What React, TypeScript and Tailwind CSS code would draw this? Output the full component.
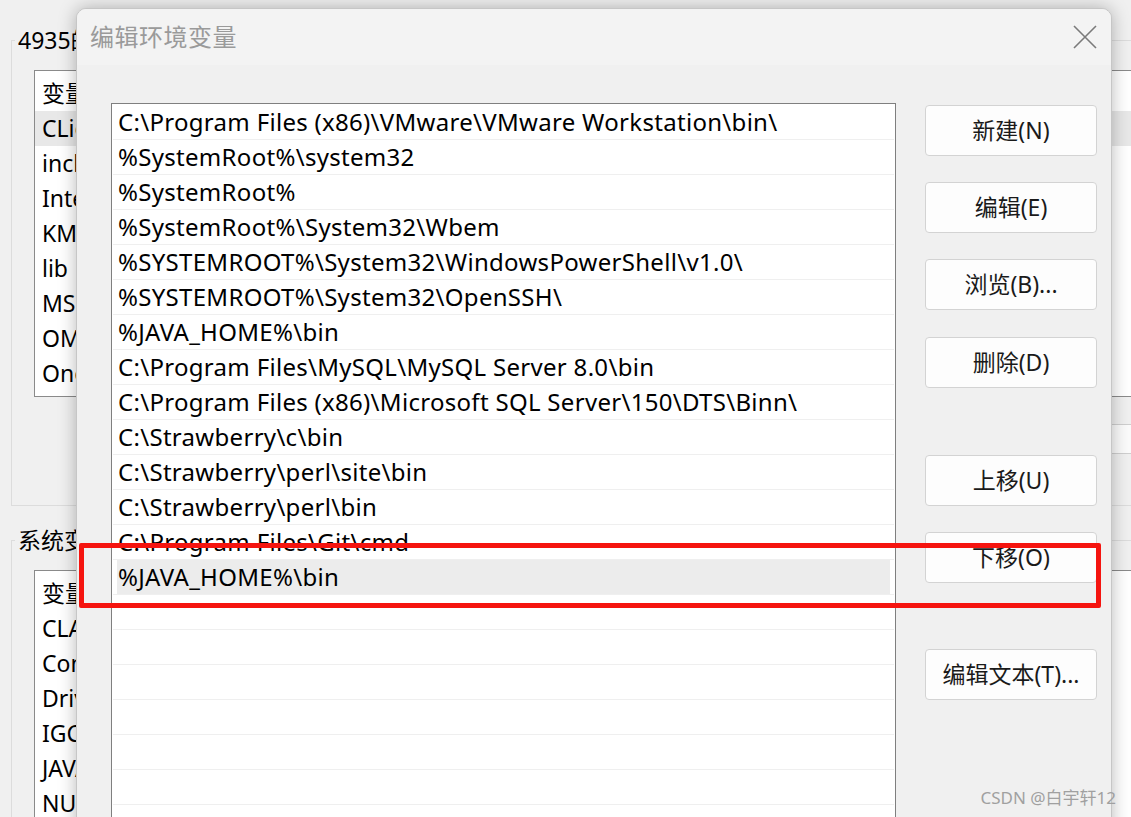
import React from "react";

const FONT = { fontFamily: '"Noto Sans", "Noto Sans CJK SC", sans-serif' };

const paths = [
  "C:\\Program Files (x86)\\VMware\\VMware Workstation\\bin\\",
  "%SystemRoot%\\system32",
  "%SystemRoot%",
  "%SystemRoot%\\System32\\Wbem",
  "%SYSTEMROOT%\\System32\\WindowsPowerShell\\v1.0\\",
  "%SYSTEMROOT%\\System32\\OpenSSH\\",
  "%JAVA_HOME%\\bin",
  "C:\\Program Files\\MySQL\\MySQL Server 8.0\\bin",
  "C:\\Program Files (x86)\\Microsoft SQL Server\\150\\DTS\\Binn\\",
  "C:\\Strawberry\\c\\bin",
  "C:\\Strawberry\\perl\\site\\bin",
  "C:\\Strawberry\\perl\\bin",
  "C:\\Program Files\\Git\\cmd",
  "%JAVA_HOME%\\bin",
];

const rows = [...paths, ...Array(8).fill("")];

function BgList({ items, hl }: { items: string[]; hl?: number }) {
  return (
    <div className="ml-[22px] w-[1200px] border border-[#8a8a8a] bg-white py-[5px]">
      {items.map((t, i) => (
        <div
          key={i}
          className={`h-[35px] pl-[7px] flex items-center text-[23px] text-black ${i === hl ? "bg-[#e8e8e8]" : ""}`}
        >
          {t}
        </div>
      ))}
    </div>
  );
}

function Btn({ label, mt }: { label: string; mt: string }) {
  return (
    <div
      className={`${mt} w-[172px] h-[51px] rounded-[4px] border border-[#d3d3d3] bg-[#fdfdfd] flex items-center justify-center text-[23px] text-[#1a1a1a]`}
    >
      {label}
    </div>
  );
}

export default function App() {
  return (
    <div className="relative w-[1131px] h-[817px] overflow-hidden bg-[#f0f0f0]" style={FONT}>
      {/* background window */}
      <div className="pl-[11px] pt-[26px]">
        <fieldset className="border border-[#dcdcdc] h-[480px] pt-[16px]">
          <legend className="ml-[3px] px-[3px] text-[23px] text-black leading-[28px]">4935的用户变量(U)</legend>
          <BgList items={["变量", "CLion", "include", "IntelliJ", "KMP", "lib", "MSMPI", "OMP", "OneDrive"]} hl={1} />
          <div className="mt-[27px] ml-[900px] w-[300px] h-[30px] border border-[#cfcfcf] bg-[#fbfbfb]" />
        </fieldset>
        <fieldset className="mt-[20px] border border-[#dcdcdc] h-[400px] pt-[16px]">
          <legend className="ml-[3px] px-[3px] text-[23px] text-black leading-[28px]">系统变量(S)</legend>
          <BgList items={["变量", "CLASSPATH", "ComSpec", "DriverData", "IGCCSVC_DB", "JAVA_HOME", "NUMBER"]} />
        </fieldset>
      </div>

      {/* dialog window */}
      <div className="absolute left-[76px] top-[8px] w-[1036px] h-[840px] rounded-t-[10px] border border-[#c6c6c6] bg-[#f0f0f0] shadow-[0_0_18px_rgba(0,0,0,0.28)] overflow-hidden">
        <div className="h-[56px] bg-[#f3f3f3] flex items-center justify-between pl-[13px] pr-[8px]">
          <span className="text-[24px] text-[#9a9a9a] tracking-[0.5px]">编辑环境变量</span>
          <svg width="36" height="36" viewBox="0 0 36 36">
            <path d="M7 7 L29 29 M29 7 L7 29" stroke="#7a7a7a" strokeWidth="1.6" fill="none" />
          </svg>
        </div>
        <div className="flex pl-[34px] pt-[38px]">
          <div className="w-[785px] border border-[#7f7f7f] bg-white pt-[1px] px-[1px]">
            {rows.map((t, i) => (
              <div key={i} className="border-b border-[#efefef]">
                <div
                  className={`h-[34px] mx-[4px] pl-[1px] flex items-center text-[24px] tracking-[0.3px] text-black whitespace-nowrap ${i === 13 ? "bg-[#ececec]" : ""}`}
                >
                  {t}
                </div>
              </div>
            ))}
          </div>
          <div className="ml-[29px] flex flex-col">
            <Btn label="新建(N)" mt="mt-[2px]" />
            <Btn label="编辑(E)" mt="mt-[26px]" />
            <Btn label="浏览(B)..." mt="mt-[26px]" />
            <Btn label="删除(D)" mt="mt-[27px]" />
            <Btn label="上移(U)" mt="mt-[67px]" />
            <Btn label="下移(O)" mt="mt-[26px]" />
            <Btn label="编辑文本(T)..." mt="mt-[66px]" />
          </div>
        </div>
      </div>

      {/* red annotation */}
      <div className="absolute left-[79px] top-[543px] w-[1022px] h-[65px] border-[5px] border-[#f5140f] rounded-[2px]" />

      {/* watermark */}
      <div className="absolute right-[15px] bottom-[7px] text-[17px] text-[#a0a0a0]">CSDN @白宇轩12</div>
    </div>
  );
}
